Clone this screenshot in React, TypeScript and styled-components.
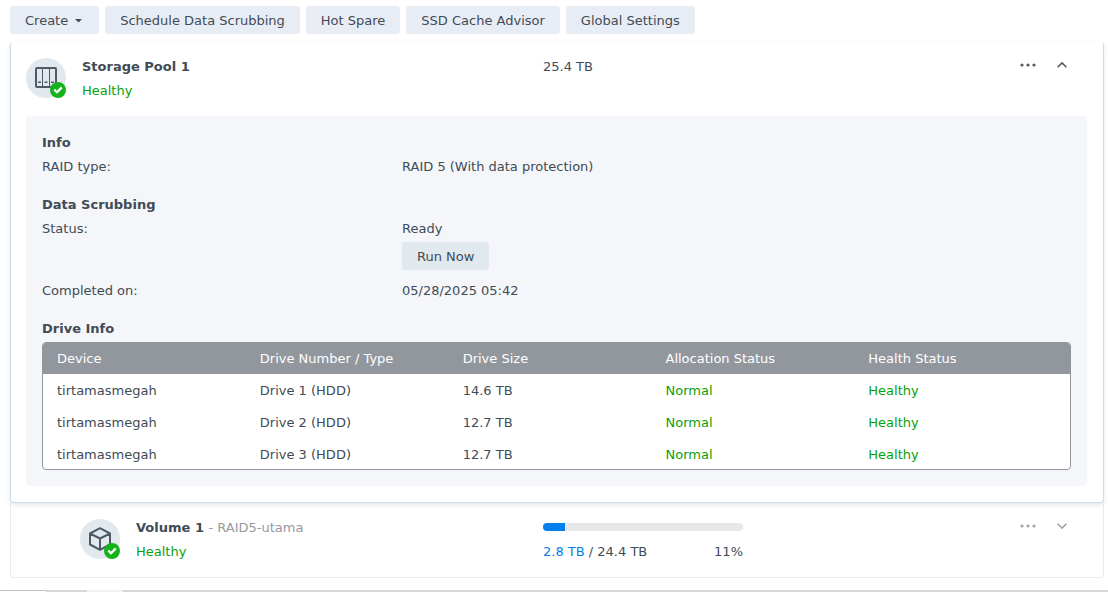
import React from "react";
import styled, { createGlobalStyle } from "styled-components";

const GlobalStyle = createGlobalStyle`
  * { box-sizing: border-box; }
  body {
    margin: 0;
    background: #fff;
    color: #414b55;
    font: 13px/24px Verdana, "DejaVu Sans", sans-serif;
  }
  button { font: inherit; color: inherit; cursor: pointer; }
`;

const Page = styled.div`
  display: flex;
  flex-direction: column;
  min-height: 100vh;
`;

const Toolbar = styled.div`
  display: flex;
  gap: 6px;
  padding: 6px 10px 8px;
`;

const Button = styled.button<{ $dark?: boolean }>`
  display: inline-flex;
  align-items: center;
  height: 28px;
  padding: 2px 15px 0;
  border: 0;
  border-radius: 3px;
  background: ${(p) => (p.$dark ? "#e1e8ee" : "#e8edf5")};
  white-space: nowrap;
`;

const Caret = styled.svg`
  margin: 0 2px 0 7px;
`;

const Main = styled.main`
  margin: 0 4px 12px 10px;
`;

const PoolCard = styled.section`
  position: relative;
  padding: 12px 16px 16px 15px;
  border: 1px solid #cddbe6;
  border-top-color: transparent;
  border-radius: 4px;
  background: #fff;
  box-shadow: 0 2px 4px rgba(65, 95, 125, 0.15);
`;

const VolumeCard = styled.section`
  padding: 13px 16px 13px 69px;
  border: 1px solid #e8ebf0;
  border-top: 0;
  border-radius: 0 0 4px 4px;
`;

const Header = styled.header`
  display: flex;
  height: 48px;
`;

const Summary = styled.div<{ $indent?: boolean }>`
  display: flex;
  gap: 16px;
  flex: 0 0 ${(p) => (p.$indent ? "463px" : "517px")};
`;

const IconDisc = styled.div`
  position: relative;
  width: 40px;
  height: 40px;
  margin-top: 3px;
  border-radius: 50%;
  background: #e1e8ee;
`;

const Glyph = styled.svg`
  display: block;
`;

const Badge = styled.svg`
  position: absolute;
  right: 0;
  bottom: 0;
`;

const Title = styled.h2`
  margin: 0;
  font-size: 13px;
  font-weight: 700;
`;

const Subtitle = styled.span`
  color: #96999e;
  font-weight: 400;
`;

const Good = styled.div`
  color: #0a9f0a;
`;

const Actions = styled.div`
  display: flex;
  gap: 12px;
  margin-left: auto;
  padding-right: 14px;
`;

const IconButton = styled.button<{ $muted?: boolean }>`
  display: flex;
  align-items: center;
  justify-content: center;
  width: 22px;
  height: 20px;
  padding: 0;
  border: 0;
  background: none;
  color: ${(p) => (p.$muted ? "#a0a5aa" : "#505a64")};
`;

const Panel = styled.div`
  margin-top: 13px;
  padding: 15px 16px 16px;
  border-radius: 4px;
  background: #f4f6fa;
`;

const Group = styled.section`
  margin-bottom: 14px;
`;

const GroupTitle = styled.h3`
  margin: 0;
  font-size: 13px;
  font-weight: 700;
`;

const Fields = styled.dl`
  display: grid;
  grid-template-columns: 360px 1fr;
  margin: 0;
`;

const Term = styled.dt``;

const Value = styled.dd`
  margin: 0;
`;

const RunRow = styled.div`
  display: flex;
  padding: 1px 0 9px;
`;

const TableFrame = styled.div`
  margin-top: 1px;
  overflow: hidden;
  border: 1px solid #92979e;
  border-radius: 4px;
  background: #fff;
`;

const Table = styled.table`
  width: 100%;
  border-collapse: collapse;
  table-layout: fixed;
`;

const HeadCell = styled.th`
  width: 19.75%;
  height: 31px;
  padding: 0 0 0 14px;
  background: #92979e;
  color: #fff;
  font-weight: 500;
  text-align: left;

  &:last-child { width: auto; }
`;

const Cell = styled.td<{ $good?: boolean }>`
  height: 32px;
  padding: 2px 0 0 14px;
  color: ${(p) => (p.$good ? "#0a9f0a" : "inherit")};

  tr:last-child > & { height: 31px; }
`;

const Usage = styled.div`
  width: 200px;
`;

const Track = styled.div`
  height: 8px;
  margin: 7px 0 9px;
  overflow: hidden;
  border-radius: 4px;
  background: #e6e8ea;
`;

const Fill = styled.div`
  height: 100%;
  background: #057feb;
`;

const UsageText = styled.div`
  display: flex;
  justify-content: space-between;
`;

const Used = styled.span`
  color: #057feb;
`;

const Footer = styled.footer`
  display: flex;
  height: 2px;
  margin-top: auto;
  background: #d8d8d8;
`;

const FooterTab = styled.div<{ $width: number; $offset?: number; $line?: boolean }>`
  width: ${(p) => p.$width}px;
  margin-left: ${(p) => p.$offset || 0}px;
  border-top: ${(p) => (p.$line ? "1px solid #c4c4c4" : "0")};
  background: ${(p) => (p.$line ? "#fff" : "#f0f0f0")};
`;

const HealthyBadge = () => (
  <Badge width="16" height="16" viewBox="0 0 16 16" aria-hidden="true">
    <circle cx="8" cy="8" r="8" fill="#14b31b" />
    <path d="M4.3 7.6 7 10.2l4.8-4.8" fill="none" stroke="#fff" strokeWidth="2.2" />
  </Badge>
);

const PoolIcon = () => (
  <IconDisc>
    <Glyph width="40" height="40" viewBox="0 0 40 40" aria-hidden="true">
      <rect x="10" y="10" width="20" height="19" rx="1" fill="none" stroke="#505a64" strokeWidth="2" />
      <path d="M16.5 10v19M23.5 10v19" stroke="#505a64" strokeWidth="1" />
      <path d="M12 24.3h3M18.5 24.3h3M25 24.3h3" stroke="#505a64" strokeWidth="1.5" />
    </Glyph>
    <HealthyBadge />
  </IconDisc>
);

const VolumeIcon = () => (
  <IconDisc>
    <Glyph width="40" height="40" viewBox="0 0 40 40" aria-hidden="true">
      <path
        d="M20 9.2 30 14.5v11L20 30.8 10 25.5v-11zM10 14.500l10 5 10-5M20 19.500v11"
        fill="none"
        stroke="#505a64"
        strokeWidth="2"
        strokeLinejoin="round"
      />
    </Glyph>
    <HealthyBadge />
  </IconDisc>
);

const CardActions = ({ name, open }: { name: string; open?: boolean }) => (
  <Actions>
    <IconButton $muted={!open} aria-label={`${name} actions`}>
      <svg width="16" height="4" viewBox="0 0 16 4" fill="currentColor">
        <circle cx="2" cy="2" r="1.6" />
        <circle cx="8" cy="2" r="1.6" />
        <circle cx="14" cy="2" r="1.6" />
      </svg>
    </IconButton>
    <IconButton $muted={!open} aria-label={open ? `Collapse ${name}` : `Expand ${name}`} aria-expanded={!!open}>
      <svg width="10" height="6" viewBox="0 0 10 6" fill="none" stroke="currentColor" strokeWidth="1.6">
        <path d={open ? "M.6 5.300 5 .9l4.400 4.400" : "M.6 .7 5 5.100 9.400 .7"} />
      </svg>
    </IconButton>
  </Actions>
);

const drives = [
  { device: "tirtamasmegah", type: "Drive 1 (HDD)", size: "14.6 TB" },
  { device: "tirtamasmegah", type: "Drive 2 (HDD)", size: "12.7 TB" },
  { device: "tirtamasmegah", type: "Drive 3 (HDD)", size: "12.7 TB" },
];

const columns = ["Device", "Drive Number / Type", "Drive Size", "Allocation Status", "Health Status"];

export default function App() {
  const usedPercent = 11;

  return (
    <Page>
      <GlobalStyle />
      <Toolbar>
        <Button>
          Create
          <Caret width="7" height="4" viewBox="0 0 7 4" aria-hidden="true">
            <path d="M0 0h7L3.5 3.500z" fill="#414b55" />
          </Caret>
        </Button>
        <Button>Schedule Data Scrubbing</Button>
        <Button>Hot Spare</Button>
        <Button>SSD Cache Advisor</Button>
        <Button>Global Settings</Button>
      </Toolbar>
      <Main>
        <PoolCard>
          <Header>
            <Summary>
              <PoolIcon />
              <div>
                <Title>Storage Pool 1</Title>
                <Good>Healthy</Good>
              </div>
            </Summary>
            <div>25.4 TB</div>
            <CardActions name="Storage Pool 1" open />
          </Header>
          <Panel>
            <Group>
              <GroupTitle>Info</GroupTitle>
              <Fields>
                <Term>RAID type:</Term>
                <Value>RAID 5 (With data protection)</Value>
              </Fields>
            </Group>
            <Group>
              <GroupTitle>Data Scrubbing</GroupTitle>
              <Fields>
                <Term>Status:</Term>
                <Value>
                  Ready
                  <RunRow>
                    <Button $dark>Run Now</Button>
                  </RunRow>
                </Value>
                <Term>Completed on:</Term>
                <Value>05/28/2025 05:42</Value>
              </Fields>
            </Group>
            <GroupTitle>Drive Info</GroupTitle>
            <TableFrame>
              <Table>
                <thead>
                  <tr>
                    {columns.map((column) => (
                      <HeadCell key={column} scope="col">{column}</HeadCell>
                    ))}
                  </tr>
                </thead>
                <tbody>
                  {drives.map((drive) => (
                    <tr key={drive.type}>
                      <Cell>{drive.device}</Cell>
                      <Cell>{drive.type}</Cell>
                      <Cell>{drive.size}</Cell>
                      <Cell $good>Normal</Cell>
                      <Cell $good>Healthy</Cell>
                    </tr>
                  ))}
                </tbody>
              </Table>
            </TableFrame>
          </Panel>
        </PoolCard>
        <VolumeCard>
          <Header>
            <Summary $indent>
              <VolumeIcon />
              <div>
                <Title>
                  Volume 1 <Subtitle>- RAID5-utama</Subtitle>
                </Title>
                <Good>Healthy</Good>
              </div>
            </Summary>
            <Usage>
              <Track>
                <Fill style={{ width: `${usedPercent}%` }} />
              </Track>
              <UsageText>
                <span>
                  <Used>2.8 TB</Used> / 24.4 TB
                </span>
                <span>{usedPercent}%</span>
              </UsageText>
            </Usage>
            <CardActions name="Volume 1" />
          </Header>
        </VolumeCard>
      </Main>
      <Footer>
        <FooterTab $width={46} $line />
        <FooterTab $width={36} $offset={41} />
      </Footer>
    </Page>
  );
}
